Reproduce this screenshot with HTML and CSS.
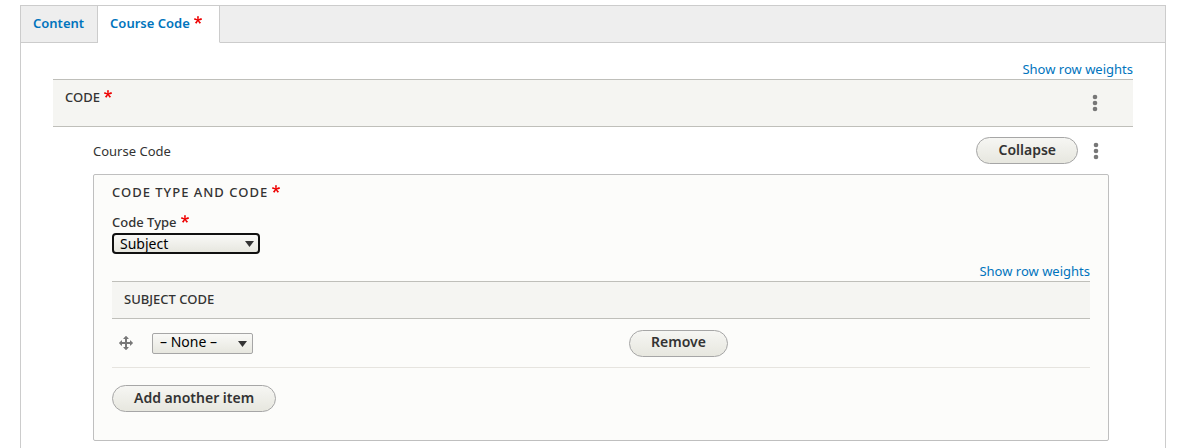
FILE: index.html
```html
<!DOCTYPE html>
<html lang="en">
<head>
  <meta charset="UTF-8">
  <meta name="viewport" content="width=device-width, initial-scale=1">
  <title>Course Code</title>
  <link rel="stylesheet" href="styles.css">
</head>
<body>
  <!-- Shared icons -->
  <svg class="sprite" aria-hidden="true">
    <symbol id="required" viewBox="0 0 16 16">
      <path d="M0,7.562l1.114-3.438c2.565,0.906,4.43,1.688,5.59,2.35C6.398,3.553,6.237,1.544,6.22,0.447h3.511c-0.05,1.597-0.234,3.6-0.558,6.003c1.664-0.838,3.566-1.613,5.714-2.325L16,7.562c-2.05,0.678-4.06,1.131-6.028,1.356c0.984,0.856,2.372,2.381,4.166,4.575l-2.906,2.059c-0.935-1.274-2.041-3.009-3.316-5.206c-1.194,2.275-2.244,4.013-3.147,5.206l-2.856-2.059c1.872-2.307,3.211-3.832,4.017-4.575C3.849,8.516,1.897,8.062,0,7.562"/>
    </symbol>
    <symbol id="dots" viewBox="0 0 6 18">
      <circle cx="3" cy="3" r="2.3"/>
      <circle cx="3" cy="9" r="2.3"/>
      <circle cx="3" cy="15" r="2.3"/>
    </symbol>
  </svg>

  <main class="tabs-wrapper">
    <nav class="tabs">
      <a class="tab" href="#content">Content</a>
      <a class="tab active" href="#course-code">Course Code<svg class="required"><use href="#required"/></svg></a>
    </nav>

    <div class="pane" id="course-code">
      <div class="toggle"><a href="#weights">Show row weights</a></div>
      <table class="paragraphs">
        <thead>
          <tr>
            <th>
              <div class="head-row">
                <span>CODE<svg class="required"><use href="#required"/></svg></span>
                <button type="button" class="more" aria-label="More actions"><svg><use href="#dots"/></svg></button>
              </div>
            </th>
          </tr>
        </thead>
        <tbody>
          <tr>
            <td>
              <div class="paragraph-top">
                <span class="paragraph-title">Course Code</span>
                <button type="button" class="button">Collapse</button>
                <button type="button" class="more" aria-label="More actions"><svg><use href="#dots"/></svg></button>
              </div>

              <section class="fieldset">
                <h2 class="legend">CODE TYPE AND CODE<svg class="required"><use href="#required"/></svg></h2>

                <label class="label" for="code-type">Code Type<svg class="required"><use href="#required"/></svg></label>
                <select class="select focused" id="code-type">
                  <option>Subject</option>
                </select>

                <div class="toggle"><a href="#subject-weights">Show row weights</a></div>
                <table class="subjects">
                  <thead>
                    <tr>
                      <th colspan="3">SUBJECT CODE</th>
                    </tr>
                  </thead>
                  <tbody>
                    <tr>
                      <td class="handle">
                        <a href="#drag" aria-label="Drag to re-order"><svg viewBox="0 0 16 16"><path d="M14.904 7.753l-2.373-2.372c-.291-.292-.529-.193-.529.22v1.399h-3v-3h1.398c.414 0 .512-.239.221-.53l-2.371-2.372c-.137-.136-.36-.136-.497 0l-2.372 2.372c-.292.292-.193.53.22.53h1.399v3h-3v-1.369c0-.413-.239-.511-.53-.22l-2.372 2.372c-.136.136-.136.359 0 .494l2.372 2.372c.291.292.53.192.53-.219v-1.43h3v3h-1.4c-.413 0-.511.238-.22.529l2.374 2.373c.137.137.36.137.495 0l2.373-2.373c.29-.291.19-.529-.222-.529h-1.398v-3h3v1.4c0 .412.238.511.529.219l2.373-2.371c.137-.137.137-.359 0-.495z"/></svg></a>
                      </td>
                      <td class="value">
                        <select class="select small" aria-label="Subject Code">
                          <option>– None –</option>
                        </select>
                      </td>
                      <td><button type="button" class="button">Remove</button></td>
                    </tr>
                  </tbody>
                </table>
                <button type="button" class="button">Add another item</button>
              </section>
            </td>
          </tr>
        </tbody>
      </table>
    </div>
  </main>
</body>
</html>
```

FILE: styles.css
```css
* {
  box-sizing: border-box;
}

body {
  margin: 0;
  padding: 5px 15px 0 20px;
  background: #fff;
  color: #333;
  font-family: "Lucida Grande", "Noto Sans", "Open Sans", sans-serif;
  font-size: 13px;
  line-height: 20px;
}

a {
  color: #0074bd;
  text-decoration: none;
}

a:hover {
  text-decoration: underline;
}

.sprite {
  position: absolute;
  width: 0;
  height: 0;
}

.required {
  width: 8px;
  height: 8px;
  margin-left: 4px;
  vertical-align: 4px;
  fill: #e00;
}

/* Tabs */
.tabs-wrapper {
  border: 1px solid #ccc;
  border-bottom: 0;
  min-height: calc(100vh - 5px);
}

.tabs {
  display: flex;
  height: 37px;
  background: #eee;
  box-shadow: inset 0 -1px #ccc;
}

.tab {
  padding: 7px 13px 7px 12px;
  border-right: 1px solid #ccc;
  border-bottom: 1px solid #ccc;
  font-weight: 600;
}

.tab.active {
  padding-right: 17px;
  background: #fff;
  border-bottom-color: #fff;
}

.pane {
  padding: 16px 32px;
}

.toggle {
  text-align: right;
}

/* Tables */
table {
  width: 100%;
  border-collapse: collapse;
}

th {
  padding: 0 12px;
  background: #f5f5f2;
  border-top: 1px solid #bfbfba;
  border-bottom: 1px solid #bfbfba;
  font-weight: 500;
  text-align: left;
}

td {
  padding: 0;
}

.head-row {
  display: flex;
  justify-content: space-between;
  height: 46px;
  padding: 7px 23px 0 0;
}

.head-row .more {
  margin-top: 7px;
}

.paragraphs > tbody > tr > td {
  padding: 10px 24px 0 40px;
}

.paragraph-top {
  display: flex;
  align-items: center;
  gap: 15px;
  padding-right: 10px;
  margin-bottom: 10px;
}

.paragraph-title {
  flex: 1;
}

.more {
  display: flex;
  width: 6px;
  height: 18px;
  padding: 0;
  border: 0;
  background: none;
  cursor: pointer;
}

.more svg {
  width: 6px;
  height: 18px;
  fill: #777;
}

/* Fieldset */
.fieldset {
  padding: 7px 18px 28px;
  background: #fcfcfa;
  border: 1px solid #bfbfbf;
  border-radius: 2px;
}

.legend {
  margin: 0 0 10px;
  font-size: 13px;
  font-weight: 500;
  letter-spacing: 1px;
}

.label {
  display: block;
  margin-bottom: 1px;
  font-weight: 500;
}

.subjects {
  margin-bottom: 17px;
}

.subjects th {
  height: 37px;
  padding-bottom: 2px;
}

.subjects td {
  height: 49px;
  border-bottom: 1px solid #e6e4df;
}

.subjects .handle {
  width: 40px;
  padding-left: 6px;
}

.subjects .value {
  width: 477px;
}

.handle svg {
  display: block;
  width: 16px;
  height: 16px;
  fill: #787878;
}

/* Controls */
.button {
  height: 27px;
  padding: 0 21px 2px;
  border: 1px solid #a6a6a6;
  border-radius: 20px;
  background: linear-gradient(#f6f6f3, #e7e7df);
  color: #333;
  font-family: inherit;
  font-size: 14px;
  font-weight: 600;
  line-height: 20px;
  cursor: pointer;
}

.select {
  display: block;
  width: 148px;
  height: 21px;
  padding: 0 24px 2px 7px;
  appearance: none;
  border: 1px solid #a6a6a6;
  border-radius: 2px;
  background: url("data:image/svg+xml,%3Csvg xmlns='http://www.w3.org/2000/svg' width='9' height='6'%3E%3Cpath d='M0 0h9L4.5 6z' fill='%23333'/%3E%3C/svg%3E") no-repeat right 5px top 7px, linear-gradient(#f9f9f7, #e7e7df);
  color: #000;
  font-family: inherit;
  font-size: 14px;
  line-height: 16px;
}

.select.focused {
  padding: 0 24px 0 6px;
  border: 2px solid #101010;
  border-radius: 4px;
  margin-bottom: 7px;
  background-position: right 4px top 6px, 0 0;
}

.select.small {
  width: 101px;
}
```
